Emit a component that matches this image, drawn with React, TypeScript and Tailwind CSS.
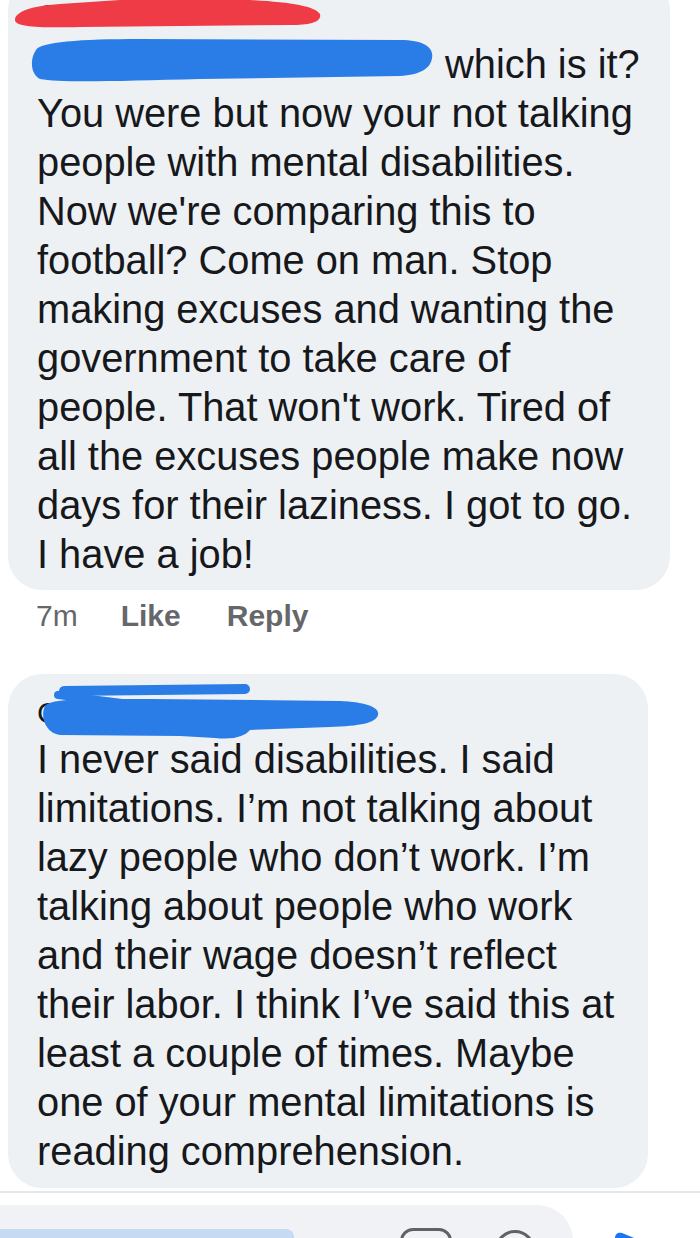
import React from "react";

const lines1 = [
  "You were but now your not talking",
  "people with mental disabilities.",
  "Now we're comparing this to",
  "football? Come on man. Stop",
  "making excuses and wanting the",
  "government to take care of",
  "people. That won't work. Tired of",
  "all the excuses people make now",
  "days for their laziness. I got to go.",
  "I have a job!",
];

const lines2 = [
  "I never said disabilities. I said",
  "limitations. I’m not talking about",
  "lazy people who don’t work. I’m",
  "talking about people who work",
  "and their wage doesn’t reflect",
  "their labor. I think I’ve said this at",
  "least a couple of times. Maybe",
  "one of your mental limitations is",
  "reading comprehension.",
];

export default function App() {
  return (
    <div className="w-[700px] h-[1238px] overflow-hidden bg-white font-['Liberation_Sans',Arial,sans-serif] text-[#16181b]">
      {/* Bubble 1 */}
      <div className="relative ml-[8px] mt-[-24px] w-[662px] rounded-[34px] bg-[#eef1f4] pl-[29px] pt-[24px] pb-[11px]">
        <div className="h-[30px] text-[30px] leading-[30px] whitespace-nowrap">C</div>
        <div className="mt-[9.5px] text-[39.8px] leading-[49px] whitespace-nowrap">
          <div>
            <span className="inline-block w-[397px] align-bottom">C</span> which is it?
          </div>
          {lines1.map((l, i) => (
            <div key={i}>{l}</div>
          ))}
        </div>
        <svg className="absolute left-0 top-0 pointer-events-none" width="662" height="130" viewBox="0 0 662 130">
          <g transform="translate(-8,24)">
            <path
              d="M15 20 C15 12 30 6 60 4 L120 0 L250 0 C290 2 315 6 320 14 C322 22 310 25 290 25 L80 27 C40 28 15 27 15 20 Z"
              fill="#ef3b45"
            />
            <path
              d="M36 50 C40 42 80 39 140 39 L400 40 C425 40 434 48 432 58 C431 68 420 75 400 76 L200 79 C120 81 60 83 40 79 C30 74 30 58 36 50 Z"
              fill="#2a7de6"
            />
          </g>
        </svg>
      </div>

      {/* Meta */}
      <div className="mt-[8px] pl-[36px] h-[36px] text-[30px] leading-[36px] text-[#65676b] flex whitespace-nowrap">
        <span>7m</span>
        <span className="ml-[43px] font-bold">Like</span>
        <span className="ml-[46px] font-bold">Reply</span>
      </div>

      {/* Bubble 2 */}
      <div className="relative ml-[8px] mt-[40px] w-[640px] rounded-[34px] bg-[#eef1f4] pl-[29px] pt-[21px] pb-[12px]">
        <div className="h-[36px] text-[30px] leading-[36px] whitespace-nowrap">C</div>
        <div className="mt-[4.5px] text-[39.8px] leading-[49px] whitespace-nowrap">
          {lines2.map((l, i) => (
            <div key={i}>{l}</div>
          ))}
        </div>
        <svg className="absolute left-0 top-0 pointer-events-none" width="640" height="80" viewBox="0 0 640 80">
          <g transform="translate(-8,-673)">
            <path d="M64 690 L245 688" stroke="#2a7de6" strokeWidth="10" strokeLinecap="round" fill="none" />
            <path d="M58 694 L130 703" stroke="#2a7de6" strokeWidth="8" strokeLinecap="round" fill="none" />
            <path
              d="M45 705 C50 697 90 698 150 698 L340 700 C365 701 380 706 378 714 C376 722 360 725 330 726 L250 729 C245 735 235 739 215 737 L180 735 L60 734 C45 732 40 715 45 705 Z"
              fill="#2a7de6"
            />
          </g>
        </svg>
      </div>

      {/* Divider */}
      <div className="mt-[3px] h-[2px] bg-[#e6e7ea]" />

      {/* Bottom composer */}
      <div className="mt-[12px] flex items-start">
        <div className="w-[573px] h-[40px] bg-[#f0f2f5] rounded-tr-[36px] flex items-start pt-[24px]">
          <div className="w-[294px] h-[20px] bg-[#c7daf4] rounded-tr-[8px]" />
          <div className="ml-[106px] mt-[-1px] w-[52px] h-[30px] border-[3px] border-[#5f6368] rounded-[13px]" />
          <div className="ml-[43px] mt-[1px] w-[40px] h-[40px] border-[3px] border-[#5f6368] rounded-full" />
        </div>
        <svg className="ml-[40px] mt-[27px]" width="32" height="14" viewBox="0 0 32 14">
          <path d="M2 6 C2 2 5 0 9 1 L31 10 L31 14 L3 14 Z" fill="#1877f2" />
        </svg>
      </div>
    </div>
  );
}
